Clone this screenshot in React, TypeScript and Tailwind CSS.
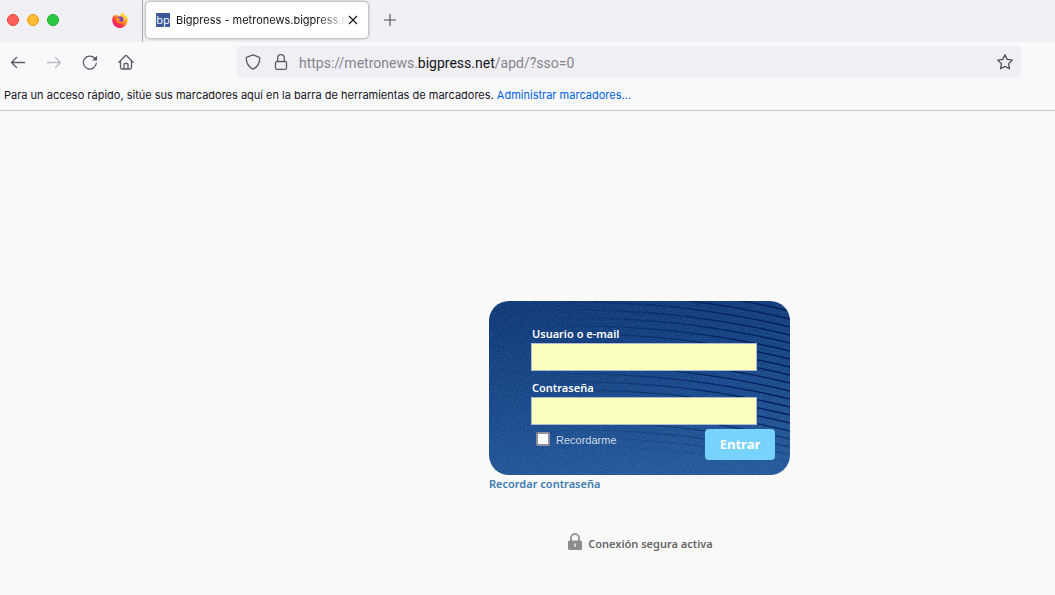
import React, { useState } from "react";

const waves = Array.from({ length: 26 }, (_, i) => i * 8 - 50);

const FirefoxLogo = () => (
  <svg className="h-4 w-4" viewBox="0 0 16 16" aria-hidden="true">
    <defs>
      <linearGradient id="flame" x1="0.9" y1="0.1" x2="0.2" y2="0.95">
        <stop offset="0" stopColor="#fff44f" />
        <stop offset="0.4" stopColor="#ffa01e" />
        <stop offset="0.7" stopColor="#ff3647" />
        <stop offset="1" stopColor="#e31587" />
      </linearGradient>
    </defs>
    <path
      d="M15.4 5.6c-.4-.9-1.1-1.7-1.7-2 .4.7.6 1.3.7 1.9C13.5 3.2 11.2 2 10.8 0c-1.5 1-2 2.5-2.1 3.6-.9.1-1.5.3-2.2.7C5.2 3.5 5.300 2.500 5.300 2.500c-1 .4-1.700 1.200-2 1.700-.5-.4-.6-1.700-.5-2C1.500 3.200.2 5.500.2 8.300a7.700 7.700 0 0 0 15.400.1c.1-1 0-2-.2-2.800z"
      fill="url(#flame)"
    />
    <circle cx="8.2" cy="7.6" r="3" fill="#6b3fe0" />
    <path
      d="M4 6c1.200-.7 2.300-.3 3 .3l2 .3c0 .8-1.500 1-1.800 1.700.2 1.600 2.600 1.800 4 .6-.7 2.600-4.800 3.200-6.500.8C3.800 8.500 3.700 7 4 6z"
      fill="#ff8a16"
    />
  </svg>
);

const CardBackground = () => (
  <svg
    className="absolute inset-0 h-full w-full"
    viewBox="0 0 301 174"
    preserveAspectRatio="none"
    aria-hidden="true"
  >
    <defs>
      <linearGradient id="night" x1="0.4" y1="0" x2="0.6" y2="1">
        <stop offset="0" stopColor="#0e3777" />
        <stop offset="0.5" stopColor="#164788" />
        <stop offset="1" stopColor="#235899" />
      </linearGradient>
      <linearGradient id="fade" x1="0" y1="0" x2="1" y2="0">
        <stop offset="0.15" stopColor="#000" />
        <stop offset="0.5" stopColor="#777" />
        <stop offset="0.8" stopColor="#fff" />
      </linearGradient>
      <linearGradient id="lower" x1="0.5" y1="0" x2="0.4" y2="1">
        <stop offset="0.6" stopColor="#000" stopOpacity="0" />
        <stop offset="0.9" stopColor="#000" />
      </linearGradient>
      <mask id="waveMask">
        <rect width="301" height="174" fill="url(#fade)" />
        <rect width="301" height="174" fill="url(#lower)" />
      </mask>
      <filter id="grain">
        <feTurbulence type="fractalNoise" baseFrequency="0.7" numOctaves="2" />
        <feColorMatrix values="0 0 0 0 0.5  0 0 0 0 0.65  0 0 0 0 0.85  0.6 0 0 0 -0.22" />
      </filter>
    </defs>
    <rect width="301" height="174" fill="url(#night)" />
    <rect width="301" height="174" filter="url(#grain)" opacity="0.5" />
    <g mask="url(#waveMask)" fill="none" stroke="#04205a" strokeWidth="1.3">
      {waves.map((y) => (
        <path key={y} d={`M0 ${y + 8}Q150 ${y - 8} 301 ${y + 28}`} />
      ))}
    </g>
  </svg>
);

const Browser: React.FC = () => (
  <header className="border-b border-[#cccccf] bg-[#f9f9fb] font-['Inter','Liberation_Sans',sans-serif] text-[#15141a]">
    {/* Tabs */}
    <div className="flex h-[42px] bg-[#f0eff4]">
      <div className="flex w-[143px] shrink-0 items-center border-r border-[#aaaab0] pb-0.5 pl-[7px]">
        <div className="flex flex-1 gap-2">
          <span className="h-3 w-3 rounded-full border border-[#e0443e] bg-[#ff5f57]" />
          <span className="h-3 w-3 rounded-full border border-[#dea123] bg-[#febc2e]" />
          <span className="h-3 w-3 rounded-full border border-[#1aab29] bg-[#28c840]" />
        </div>
        <div className="mr-3.5">
          <FirefoxLogo />
        </div>
      </div>
      <div className="mt-0.5 ml-[3px] flex h-9 w-[222px] items-center rounded bg-white px-2.5 shadow-[0_0_3px_rgba(0,0,0,0.5)]">
        <span className="flex h-3.5 w-3.5 shrink-0 items-center justify-center bg-[#3b5998] font-['Open_Sans',sans-serif] text-[11px] leading-3 text-white">
          bp
        </span>
        <span className="ml-1.5 flex-1 overflow-hidden pt-px text-[11px] whitespace-nowrap [mask-image:linear-gradient(to_right,#000_82%,transparent)]">
          Bigpress - metronews.bigpress.net
        </span>
        <button aria-label="Cerrar pestaña" className="shrink-0">
          <svg className="h-2.5 w-2.5" viewBox="0 0 10 10" stroke="#15141a" strokeWidth="1.1">
            <path d="M1 1l8 8M9 1l-8 8" />
          </svg>
        </button>
      </div>
      <button aria-label="Nueva pestaña" className="ml-4 pb-0.5">
        <svg className="h-3 w-3" viewBox="0 0 12 12" stroke="#4a4a52" strokeWidth="1.1">
          <path d="M6 0v12M0 6h12" />
        </svg>
      </button>
    </div>

    {/* Toolbar */}
    <div className="flex items-center pt-1 pr-[34px] pl-2.5">
      <nav className="flex gap-5">
        <button aria-label="Atrás">
          <svg className="h-4 w-4" viewBox="0 0 16 16" fill="none" stroke="#5b5b66" strokeWidth="1.3" strokeLinecap="round" strokeLinejoin="round">
            <path d="M14.500 8.500H1.500M6.500 3.500L1.500 8.500L6.500 13.500" />
          </svg>
        </button>
        <button aria-label="Adelante">
          <svg className="h-4 w-4" viewBox="0 0 16 16" fill="none" stroke="#bcbcc2" strokeWidth="1.3" strokeLinecap="round" strokeLinejoin="round">
            <path d="M1.500 8.500h13M9.500 3.500l5 5L9.500 13.500" />
          </svg>
        </button>
        <button aria-label="Recargar">
          <svg className="h-4 w-4" viewBox="0 0 16 16" fill="none" stroke="#5b5b66" strokeWidth="1.3" strokeLinecap="round">
            <path d="M14.300 9.500A6.500 6.500 0 1 1 12.700 4.200" />
            <path d="M15 1.500V6.500H10z" fill="#5b5b66" stroke="none" />
          </svg>
        </button>
        <button aria-label="Inicio">
          <svg className="h-4 w-4" viewBox="0 0 16 16" fill="none" stroke="#5b5b66" strokeWidth="1.3" strokeLinecap="round" strokeLinejoin="round">
            <path d="M.9 8.300L7.300 1.800q.7-.6 1.400 0L15.100 8.300M2.500 7v6.500q0 1.500 1.500 1.500h8q1.500 0 1.500-1.500V7M6 15v-4.500q0-1 1-1h2q1 0 1 1V15" />
          </svg>
        </button>
      </nav>
      <div className="ml-[103px] flex h-8 flex-1 items-center rounded bg-[#f0eff4] px-2">
        <svg className="h-4 w-4" viewBox="0 0 16 16" fill="none" stroke="#5b5b66" strokeWidth="1.3" strokeLinejoin="round">
          <path d="M8 .9l5.900 2.200q.9.4.9 1.300C14.600 9.500 12.500 13 8 15.200 3.500 13 1.400 9.500 1.200 4.400q0-.9.9-1.300z" />
        </svg>
        <svg className="ml-3 h-4 w-4" viewBox="0 0 16 16" fill="none" stroke="#5b5b66" strokeWidth="1.3">
          <rect x="2.500" y="7.500" width="11" height="7.800" rx="1.500" />
          <path d="M4.700 7.500V4a3.300 3.300 0 0 1 6.600 0v3.500" />
        </svg>
        <div className="ml-2.5 flex-1 pt-0.5 font-['Roboto',sans-serif] text-sm text-[#86858b]">
          https://metronews.<span className="text-[#15141a]">bigpress.net</span>/apd/?sso=0
        </div>
        <button aria-label="Añadir a marcadores">
          <svg className="h-4 w-4" viewBox="0 0 16 16" fill="none" stroke="#4f4f59" strokeWidth="1.3" strokeLinejoin="round">
            <path d="M8 .8l2.200 4.600 5.100.7-3.700 3.500.9 5.200L8 12.400l-4.500 2.400.9-5.200L.7 6.100l5.100-.7z" />
          </svg>
        </button>
      </div>
    </div>

    {/* Bookmarks */}
    <p className="px-1 pt-2 pb-1.5 text-[11px] leading-[18px]">
      Para un acceso rápido, sitúe sus marcadores aquí en la barra de herramientas de marcadores.{" "}
      <a href="#" className="text-[#0061e0]">
        Administrar marcadores…
      </a>
    </p>
  </header>
);

const Login: React.FC = () => {
  const [user, setUser] = useState("");
  const [password, setPassword] = useState("");
  const [remember, setRemember] = useState(false);

  return (
    <div className="w-[301px]">
      <form
        onSubmit={(e) => e.preventDefault()}
        className="relative overflow-hidden rounded-[20px] text-white"
      >
        <CardBackground />
        <div className="relative pt-[25px] pr-[15px] pb-[15px] pl-[42px]">
          <div className="mr-[18px]">
            <label htmlFor="user" className="mb-px block pl-px text-[11px] leading-4 font-semibold">
              Usuario o e-mail
            </label>
            <input
              id="user"
              type="text"
              value={user}
              onChange={(e) => setUser(e.target.value)}
              className="block h-7 w-full border border-[#aebbd0] bg-[#faffbd] px-1 text-sm text-black"
            />
            <label htmlFor="password" className="mt-[9px] mb-px block pl-px text-[11px] leading-4 font-semibold">
              Contraseña
            </label>
            <input
              id="password"
              type="password"
              value={password}
              onChange={(e) => setPassword(e.target.value)}
              className="block h-7 w-full border border-[#aebbd0] bg-[#faffbd] px-1 text-sm text-black"
            />
          </div>
          <div className="mt-1 flex items-start justify-between">
            <label className="mt-[3px] ml-[5px] flex items-start gap-1.5 font-['Liberation_Sans',Arial,sans-serif] text-[11px] leading-4 text-[#cdd8e8]">
              <input
                type="checkbox"
                checked={remember}
                onChange={(e) => setRemember(e.target.checked)}
                className="h-3.5 w-3.5 appearance-none rounded-xs border-2 border-[#8f8f9d] bg-white checked:bg-[#0061e0]"
              />
              Recordarme
            </label>
            <button
              type="submit"
              className="h-[31px] w-[70px] rounded bg-[#77d2fd] text-[13px] font-bold"
            >
              Entrar
            </button>
          </div>
        </div>
      </form>
      <a href="#" className="block text-[11px] leading-[18px] font-semibold text-[#4079b0]">
        Recordar contraseña
      </a>
      <div className="mt-10 flex items-start justify-center gap-1.5 pl-0.5 text-[11px] leading-[22px] font-semibold text-[#666]">
        <svg className="h-[18px] w-3.5" viewBox="0 0 14 18" fill="none">
          <path d="M3 8V5a4 4 0 0 1 8 0v3" stroke="#999" strokeWidth="2" />
          <rect y="7.500" width="14" height="9.500" rx="1.500" fill="#8c8c8c" />
          <path d="M7 10.500v3.500" stroke="#eee" strokeWidth="1.500" />
        </svg>
        Conexión segura activa
      </div>
    </div>
  );
};

const App = () => {
  return (
    <div className="flex min-h-screen flex-col bg-[#f9f9f9]">
      <Browser />
      <main className="flex flex-1 justify-center pt-[190px] pl-56 font-['Noto_Sans','Open_Sans',sans-serif]">
        <Login />
      </main>
    </div>
  );
};

export default App;
